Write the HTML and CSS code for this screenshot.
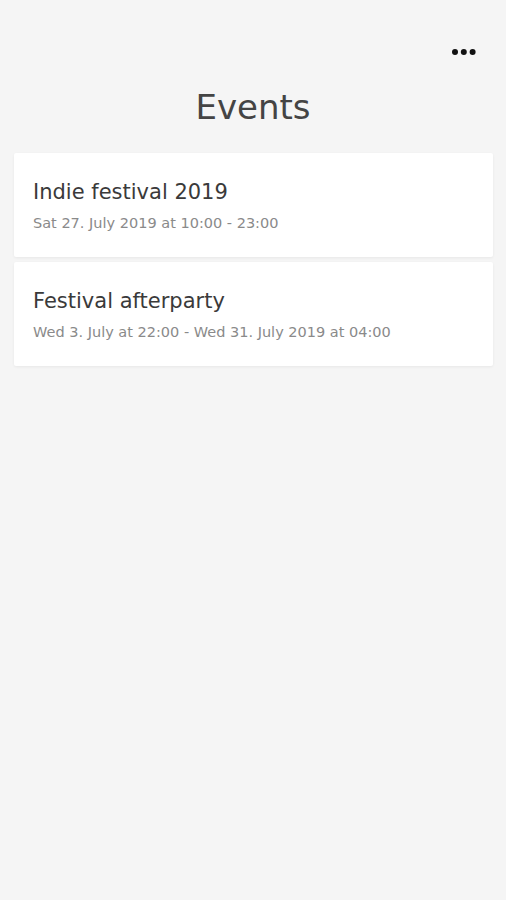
FILE: index.html
```
<!DOCTYPE html>
<html lang="en">
<head>
<meta charset="utf-8">
<title>Events</title>
<link rel="stylesheet" href="styles.css">
</head>
<body>
<div class="app">
  <header class="topbar">
    <button class="more" aria-label="More options">
      <svg width="26" height="8" viewBox="0 0 26 8"><circle cx="4" cy="4" r="3"/><circle cx="12.8" cy="4" r="3"/><circle cx="21.6" cy="4" r="3"/></svg>
    </button>
  </header>
  <h1 class="title">Events</h1>
  <ul class="events">
    <li class="card">
      <div class="card-title">Indie festival 2019</div>
      <div class="card-date">Sat 27. July 2019 at 10:00 - 23:00</div>
    </li>
    <li class="card">
      <div class="card-title">Festival afterparty</div>
      <div class="card-date">Wed 3. July at 22:00 - Wed 31. July 2019 at 04:00</div>
    </li>
  </ul>
</div>
</body>
</html>
```
FILE: styles.css
```
html, body {
  margin: 0;
  padding: 0;
  background: #f5f5f5;
}
body {
  font-family: "DejaVu Sans", "Open Sans", sans-serif;
  color: #3c3c3c;
}
.app {
  min-height: 900px;
}
.topbar {
  display: flex;
  justify-content: flex-end;
  padding: 48px 29px 0 0;
  height: 8px;
}
.more {
  border: 0;
  background: none;
  padding: 0;
  display: flex;
  fill: #111;
}
.title {
  margin: 31px 0 0;
  text-align: center;
  font-size: 34px;
  font-weight: 500;
  line-height: 40px;
  color: #444;
}
.events {
  list-style: none;
  margin: 26px 13px 0 14px;
  padding: 0;
  display: flex;
  flex-direction: column;
  gap: 5px;
}
.card {
  background: #fff;
  height: 104px;
  box-sizing: border-box;
  padding: 26px 19px 0;
  box-shadow: 0 1px 3px rgba(0,0,0,0.06);
  border-radius: 2px;
}
.card-title {
  font-size: 21px;
  line-height: 26px;
  color: #3a3a3a;
}
.card-date {
  margin-top: 9px;
  font-size: 14.5px;
  line-height: 18px;
  color: #8a8a8a;
}
```
